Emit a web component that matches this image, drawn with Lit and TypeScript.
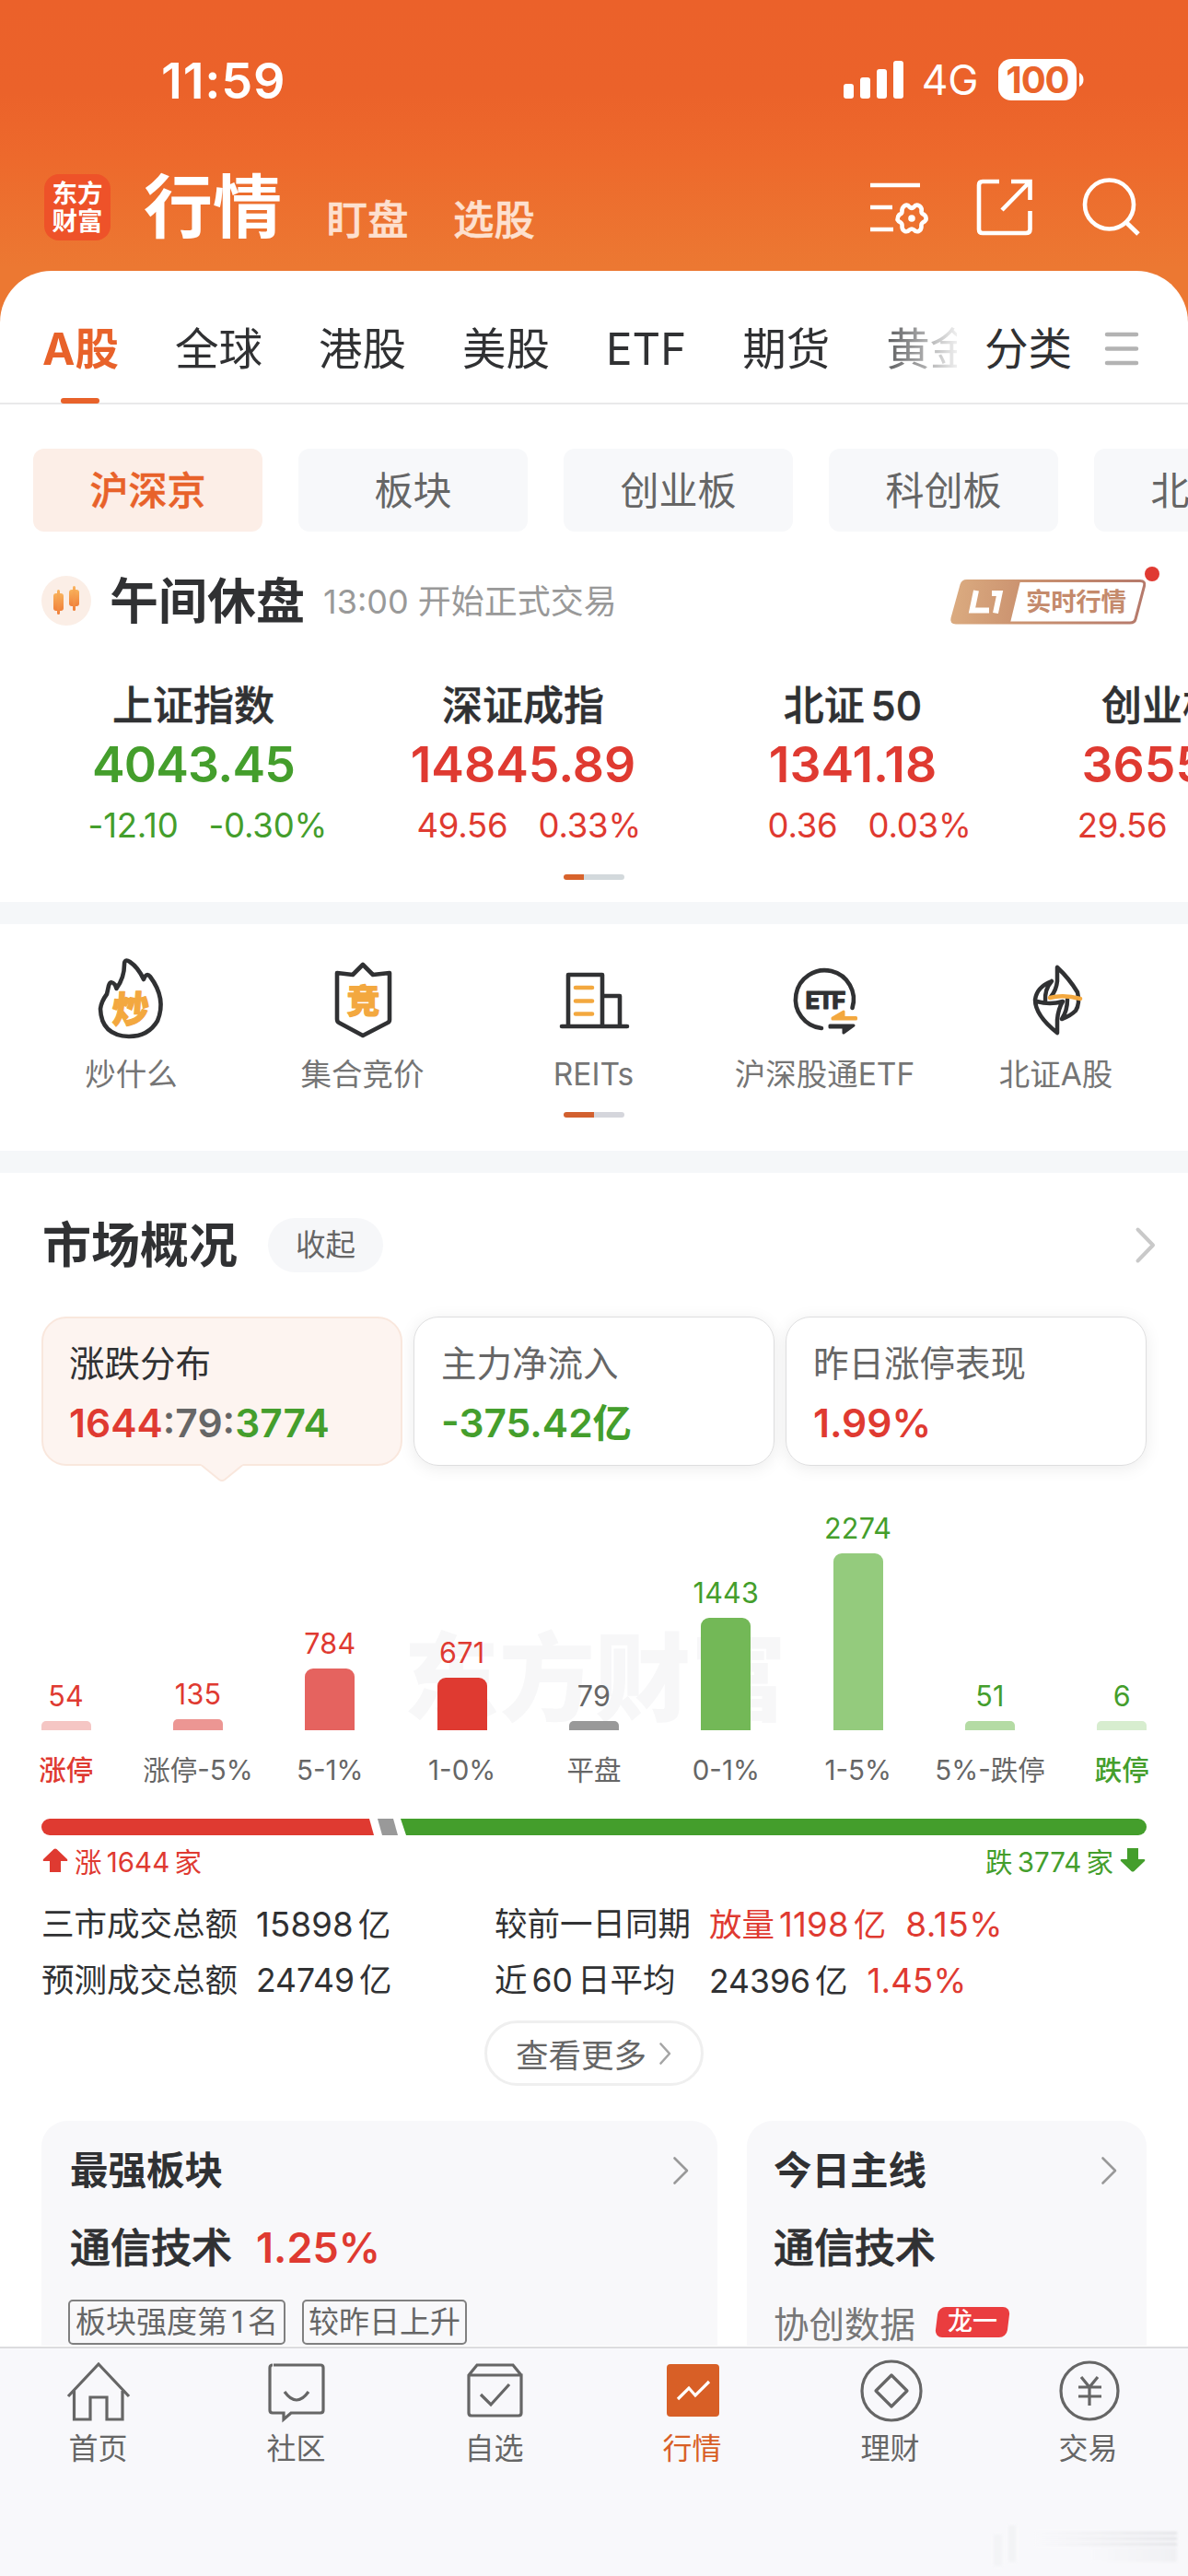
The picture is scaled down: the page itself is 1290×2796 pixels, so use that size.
import { LitElement, html, css, svg } from "lit";
import { customElement, property } from "lit/decorators.js";
import { classMap } from "lit/directives/class-map.js";

const TABS = ["A股", "全球", "港股", "美股", "ETF", "期货", "黄金"];
const CHIPS = ["沪深京", "板块", "创业板", "科创板", "北交所"];
const INDICES = [
  { name: "上证指数", value: "4043.45", diff: "-12.10", pct: "-0.30%", tone: "down" },
  { name: "深证成指", value: "14845.89", diff: "49.56", pct: "0.33%", tone: "up" },
  { name: "北证 50", value: "1341.18", diff: "0.36", pct: "0.03%", tone: "up" },
  { name: "创业板指", value: "3655.29", diff: "29.56", pct: "0.82%", tone: "up" },
];
const BARS = [
  { n: 54, label: "涨停", h: 10, c: "#f5c6c4", tone: "up", strong: true },
  { n: 135, label: "涨停-5%", h: 12, c: "#ec9693", tone: "up" },
  { n: 784, label: "5-1%", h: 67, c: "#e5635f", tone: "up" },
  { n: 671, label: "1-0%", h: 57, c: "#df3a31", tone: "up" },
  { n: 79, label: "平盘", h: 10, c: "#999999", tone: "flat" },
  { n: 1443, label: "0-1%", h: 122, c: "#73b857", tone: "down" },
  { n: 2274, label: "1-5%", h: 192, c: "#94cb7d", tone: "down" },
  { n: 51, label: "5%-跌停", h: 10, c: "#b4dba4", tone: "down" },
  { n: 6, label: "跌停", h: 10, c: "#d7edcf", tone: "down", strong: true },
];

const tones = css`
  .up { color: #df3a31; }
  .down { color: #449e2c; }
  .flat { color: #666; }
  svg { display: block; flex: none; overflow: visible; }
  :host, * { box-sizing: border-box; }
`;

const chevron = (w: number, h: number, color: string, sw: number) => html`<svg width=${w} height=${h} viewBox="0 0 ${w} ${h}" fill="none" stroke=${color} stroke-width=${sw}>
  <path d="M1.5 1.5 L${w - 2} ${h / 2} L1.5 ${h - 1.5}" stroke-linecap="round" stroke-linejoin="round"></path></svg>`;

@customElement("top-header")
class TopHeader extends LitElement {
  static styles = [tones, css`
    :host { display: block; height: 350px; padding-top: 63px; color: #fff;
      background: linear-gradient(#eb612a 0, #eb622a 100px, #ed692c 170px, #ec7832 290px); }
    .status { display: flex; align-items: center; height: 47px; padding: 0 113px 0 175px; }
    .time { font-size: 54px; font-weight: 600; letter-spacing: 0.8px; line-height: 47px; flex: 1; padding-top: 2px; }
    .net { font-size: 44.500px; line-height: 47px; margin: 2px 22px 0 19px; letter-spacing: -0.4px; }
    .battery { width: 85px; height: 45px; border-radius: 14px; background: #fff; color: #ea642b;
      font-size: 40px; font-weight: 700; line-height: 45px; text-align: center; letter-spacing: -1px; }
    .tip { margin-left: 3px; }
    .nav { display: flex; height: 72px; margin-top: 79px; padding-left: 48px; padding-right: 51px; align-items: flex-end; }
    .logo { width: 72px; height: 72px; border-radius: 16px; background: #ee5229; font-size: 27.500px; font-weight: 700;
      line-height: 30px; text-align: center; padding-top: 6px; }
    .title { font-size: 75px; font-weight: 700; line-height: 72px; margin-left: 36px; }
    .sub { font-size: 44.5px; font-weight: 500; line-height: 44px; color: #fde0cf; margin-left: 48.500px; -webkit-text-stroke: .5px currentColor; }
    .icons { margin-left: auto; }
  `];
  render() {
    return html`
      <div class="status">
        <span class="time">11:59</span>
        <svg width="66" height="41" viewBox="0 0 66 41" fill="#fff">
          <rect x="0" y="25" width="11" height="16" rx="3"></rect><rect x="18" y="18" width="11" height="23" rx="3"></rect>
          <rect x="36" y="9" width="11" height="32" rx="3"></rect><rect x="54" y="0" width="11" height="41" rx="3"></rect>
        </svg>
        <span class="net">4G</span>
        <span class="battery">100</span>
        <svg class="tip" width="5" height="15" viewBox="0 0 5 15" fill="#fff"><path d="M0 0C6 2 6 13 0 15Z"></path></svg>
      </div>
      <div class="nav">
        <div class="logo">东方<br>财富</div>
        <span class="title">行情</span><span class="sub">盯盘</span><span class="sub">选股</span>
        <svg class="icons" width="294" height="72" viewBox="945 189 294 72" fill="none" stroke="#fff" stroke-width="4.6">
          <path d="M945 201H999M945 225H969M945 249H970"></path>
          <path stroke-linejoin="round" d="M982 223.500Q985.500 221.500 987.500 224.500Q990 227 992.500 224.500Q994.500 221.500 998.500 223.500Q1001.500 226 1000.500 229.500Q1000.500 232 1003.500 233Q1006 235 1005.500 238.500Q1004.500 240.500 1002 241.500Q1000 243 1000.500 246Q1000.500 249.500 997.500 251Q994.500 252 992.500 249.500Q990 247.500 987.500 249.500Q985.500 252 982.500 251Q979.500 249.500 979.500 246Q980 243 978 241.500Q975.500 240.500 974.500 238.500Q974.500 235 976.500 233Q979.500 232 979.500 229.500Q979 226 982 223.500Z"></path>
          <circle cx="990" cy="237" r="3.800" fill="#fff" stroke="none"></circle>
          <path d="M1085 197H1067Q1063 197 1063 201V249Q1063 253 1067 253H1114Q1118.500 253 1118.500 249V229M1098 197H1118.500V217M1117.500 198L1088 228"></path>
          <circle cx="1204.500" cy="222" r="26.500"></circle><path d="M1223 241.500L1236 254" stroke-width="5"></path>
        </svg>
      </div>`;
  }
}

@customElement("market-tabs")
class MarketTabs extends LitElement {
  static styles = [tones, css`
    :host { display: block; }
    .tabs { display: flex; height: 145px; padding: 60px 54px 0 46px; border-bottom: 2px solid #e9e9ea; font-size: 47.500px; line-height: 50px; color: #303133; }
    .scroll { display: flex; gap: 61px; width: 993px; overflow: hidden; flex: none; height: 84px; white-space: nowrap;
      -webkit-mask-image: linear-gradient(90deg, #000 90%, rgba(0,0,0,.08) 100%); }
    .on { color: #e8622a; font-weight: 700; font-size: 47.500px; display: flex; flex-direction: column; align-items: center; justify-content: space-between; }
    .on i { width: 42px; height: 6px; border-radius: 3px; background: #e8622a; }
    .cat { margin-left: 30px; }
    .menu { margin: 7px 0 0 auto; }
    .chips { display: flex; gap: 39px; padding: 48px 0 0 36px; overflow: hidden; }
    .chip { flex: none; width: 249px; height: 90px; border-radius: 12px; background: #f7f8fa; color: #666; font-size: 42px; line-height: 92px; text-align: center; }
    .chip.sel { background: #fceee7; color: #e8622a; font-weight: 500; -webkit-text-stroke: .5px currentColor; }
  `];
  render() {
    return html`<div class="tabs">
        <div class="scroll">${TABS.map((t, i) => html`<span class=${classMap({ on: i === 0 })}>${t}${i === 0 ? html`<i></i>` : ""}</span>`)}</div>
        <span class="cat">分类</span>
        <svg class="menu" width="36" height="37" viewBox="0 0 36 37" stroke="#b3b3b3" stroke-width="4.5" stroke-linecap="round"><path d="M2 2H34M2 17.500H34M2 33H34"></path></svg>
      </div>
      <div class="chips">${CHIPS.map((c, i) => html`<span class=${classMap({ chip: true, sel: i === 0 })}>${c}</span>`)}</div>`;
  }
}

@customElement("index-panel")
class IndexPanel extends LitElement {
  static styles = [tones, css`
    :host { display: block; height: 402px; padding-top: 45px; }
    .head { display: flex; align-items: center; height: 60px; padding: 0 32px 0 45px; }
    .title { font-size: 53px; font-weight: 600; color: #303133; margin-left: 20px; line-height: 60px; padding-top: 1px; }
    .sub { font-size: 36px; color: #999; margin-left: 20px; line-height: 60px; flex: 1; white-space: pre; padding-top: 2px; }
    .lv { font-size: 27.500px; font-weight: 700; margin-top: -13px; }
    .cols { display: flex; padding-left: 31px; overflow: hidden; margin-top: 56px; }
    .col { flex: none; width: 358px; text-align: center; }
    .name { font-size: 44px; font-weight: 500; color: #303133; line-height: 56px; word-spacing: -5px; -webkit-text-stroke: .5px currentColor; }
    .val { font-size: 53.500px; font-weight: 600; line-height: 60px; height: 68px; padding-top: 6px; }
    .val.down { letter-spacing: -.8px; }
    .chg { display: grid; grid-template-columns: 1fr 1fr; column-gap: 33px; font-size: 36.500px; line-height: 48px; margin-top: 10px; letter-spacing: -.2px; }
    .chg :first-child { text-align: right; } .chg :last-child { text-align: left; }
    .pager { display: block; margin: 29px auto 0; width: 66px; height: 6px; border-radius: 3px; background: linear-gradient(90deg, #d8632c 22px, #d3d9dc 22px); }
  `];
  render() {
    return html`<div class="head">
        <svg width="54" height="54" viewBox="0 0 54 54"><defs><linearGradient id="c" x2="0" y2="1"><stop stop-color="#f9b25c"></stop><stop offset="1" stop-color="#f0803a"></stop></linearGradient></defs>
          <circle cx="27" cy="27" r="27" fill="#fbeee6"></circle>
          <g fill="url(#c)"><rect x="13" y="19" width="11" height="19" rx="3"></rect><rect x="17" y="15" width="3" height="27" rx="1.500"></rect>
          <rect x="30" y="15" width="11" height="18" rx="3"></rect><rect x="34" y="11" width="3" height="27" rx="1.500"></rect></g></svg>
        <span class="title">午间休盘</span><span class="sub">13:00 开始正式交易</span>
        <svg class="lv" width="226" height="64" viewBox="1032 613 226 64">
          <defs><linearGradient id="g" gradientUnits="userSpaceOnUse" x1="1035" y1="640" x2="1243" y2="665"><stop stop-color="#dbab80"></stop><stop offset=".35" stop-color="#cb9370"></stop><stop offset="1" stop-color="#b5796b"></stop></linearGradient></defs>
          <path d="M1050 629.500H1238Q1244 629.500 1242.500 635L1233 671Q1232 675 1227 675H1038Q1032.500 675 1034 670L1044 634Q1045 629.500 1050 629.500Z" fill="#fff" stroke="url(#g)" stroke-width="3"></path>
          <path d="M1050 629.500H1108L1097 675H1038Q1032.500 675 1034 670L1044 634Q1045 629.500 1050 629.500Z" fill="url(#g)"></path>
          <path d="M1060 640L1055.500 661.500H1074M1077 643H1085.500L1081 664.500" fill="none" stroke="#fff" stroke-width="6"></path>
          <text x="1114" y="662" fill="#c48a6c" textLength="109">实时行情</text>
          <circle cx="1251" cy="622" r="8" fill="#e03a32"></circle>
        </svg>
      </div>
      <div class="cols">${INDICES.map((x) => html`<div class="col">
        <div class="name">${x.name}</div><div class="val ${x.tone}">${x.value}</div>
        <div class="chg ${x.tone}"><span>${x.diff}</span><span>${x.pct}</span></div></div>`)}</div>
      <i class="pager"></i>`;
  }
}

@customElement("shortcut-grid")
class ShortcutGrid extends LitElement {
  static styles = [tones, css`
    :host { display: block; height: 294px; border: solid #f5f7f9; border-width: 24px 0; padding-top: 32px; }
    .grid { display: grid; grid-template-columns: repeat(5, 251px); padding-left: 17px; }
    .item { display: flex; flex-direction: column; align-items: center; font-size: 33.500px; line-height: 40px; color: #757575; gap: 15px; white-space: nowrap; }
    .glyph { font-weight: 900; fill: #f3a83f; stroke: #f3a83f; stroke-width: 1.2px; }
    .pager { display: block; margin: 21px auto 0; width: 66px; height: 6px; border-radius: 3px; background: linear-gradient(90deg, #d2602f 33px, #d5d6dc 33px); }
  `];
  icons = [
    svg`<path d="M34 12Q34 5 40 9Q49 15 55 28Q58 20 62 25Q80 49 70 73Q60 90 39 90Q9 89 8 60Q9 52 15 44L17 35Q19 28 24 34L25.500 38Q34 26 34 12Z"></path>
      <text class="glyph" x="21" y="75" font-size="40" transform="skewX(-4) translate(4 0)">炒</text>`,
    svg`<path d="M14 21L31 23L42 12L53 23L71 21V72Q71 74 69 75L42 89L16 75Q14 74 14 71Z"></path>
      <text class="glyph" x="24.500" y="65" font-size="36">竞</text>`,
    svg`<path d="M7 79H78M14 79V23H51V79M51 46H70V79"></path><path stroke="#f3a83f" d="M22 37H40M22 51.500H40M22 65.500H40"></path>`,
    svg`<path d="M38 81A31.500 31.500 0 1 1 71.500 59"></path>
      <text x="20.500" y="60" font-size="26" font-weight="800" fill="#303133" stroke="#303133" stroke-width="0.8" textLength="44">ETF</text>
      <path stroke="#f3a83f" stroke-width="3" fill="#f3a83f" d="M50 70L62 63V69.500H75.500V71H50Z"></path><path stroke-width="3" fill="#303133" d="M47 78H73L62 86V80H47Z"></path>`,
    svg`<path d="M43 15V30Q42 40 36 47M43 15Q56 27 65 42Q68 54 63 62Q57 68 48 71Q54 62 54 50M37 30Q21 36 19 50Q19 67 43 86V72Q44 60 49 52Q35 56 21 52M37 30Q29 39 30 52" stroke-width="4.500"></path><path stroke="#f3a83f" d="M35 48Q50 44 68 49"></path>`,
  ];
  labels = ["炒什么", "集合竞价", "REITs", "沪深股通ETF", "北证A股"];
  render() {
    return html`<div class="grid">${this.labels.map((l, i) => html`<div class="item">
      <svg width="84" height="96" viewBox="0 0 84 96" fill="none" stroke="#303133" stroke-width="4.6" stroke-linecap="round" stroke-linejoin="round">${this.icons[i]}</svg>
      <span>${l}</span></div>`)}</div><i class="pager"></i>`;
  }
}

@customElement("market-overview")
class MarketOverview extends LitElement {
  static styles = [tones, css`
    :host { display: block; padding-top: 48px; color: #303133; }
    .head { display: flex; align-items: center; height: 60px; padding: 0 36px 0 46px; }
    h2 { margin: 0; font-size: 53px; font-weight: 600; line-height: 60px; padding-top: 1px; }
    .pill { margin: 0 auto 0 33px; width: 125px; height: 59px; border-radius: 30px; background: #f6f7f9; color: #666; font-size: 32.500px; line-height: 59px; text-align: center; }
    .cards { display: flex; gap: 12px; padding: 48px 45px 0; }
    .card { flex: 1; height: 162px; border-radius: 27px; padding: 29px 29px 0; border: 1px solid #dededf; box-shadow: 0 3px 18px rgba(0,0,0,.08); font-size: 38.500px; line-height: 42px; color: #666; white-space: nowrap; }
    .card b { display: block; font-size: 42.500px; font-weight: 600; line-height: 48px; margin-top: 20px; }
    .card.sel { background: #fdf4f0; border: 2px solid #f9e7dd; box-shadow: none; color: #303133; position: relative; padding: 28px 28px 0; }
    .card .ptr { position: absolute; left: 171px; top: 158px; }
    .chart { display: grid; grid-template-columns: repeat(9, 1fr); height: 351px; position: relative; }
    .mark { position: absolute; left: 438px; top: 171px; font-size: 104px; line-height: 120px; font-weight: 900; color: #f7f7f8; white-space: nowrap; }
    .col { position: relative; display: flex; flex-direction: column; align-items: center; justify-content: flex-end; font-size: 29.500px; white-space: nowrap; }
    .num { line-height: 30px; margin-bottom: 12px; font-size: 30.500px; letter-spacing: .2px; }
    .bar { width: 54px; border-radius: 9px 9px 0 0; }
    .bar.short { border-radius: 5px 5px 0 0; }
    .lab { line-height: 36px; height: 64px; padding-top: 25px; color: #666; }
    .lab.strong { font-weight: 500; } .lab.upc { color: #df3a31; } .lab.downc { color: #449e2c; }
    .ratio { margin: 32px 45px 0; }
    .sum { display: flex; justify-content: space-between; padding: 0 46px; height: 54px; align-items: center; font-size: 29.500px; word-spacing: -3px; }
    .sum span { display: flex; align-items: center; gap: 7px; }
    .stats { display: grid; grid-template-columns: 233px 259px 233px 1fr; padding: 13px 0 0 45px; font-size: 35.500px; line-height: 60px; white-space: pre; }
    .stats span { word-spacing: -5px; }
    .stats .lg { font-size: 36.500px; letter-spacing: .2px; }
    .stats em { font-style: normal; margin-left: 21px; font-size: 36.500px; letter-spacing: .2px; }
    .stats em.lg { font-size: 37px; letter-spacing: .5px; }
    .stats b { font-weight: 400; }
    .more { display: flex; align-items: center; gap: 14px; width: 238px; height: 71px; margin: 12px auto 0; border: 3px solid #efefef; border-radius: 36px; padding-left: 31px; font-size: 35.500px; color: #666; }
  `];
  render() {
    return html`<div class="head"><h2>市场概况</h2><span class="pill">收起</span>${chevron(20, 37, "#c9c9c9", 4)}</div>
      <div class="cards">
        <div class="card sel">涨跌分布<b><span class="up">1644</span><span class="flat">:79:</span><span class="down">3774</span></b>
          <svg class="ptr" width="46" height="20" viewBox="0 0 46 20"><path d="M0 0L20 17Q23 19 26 17L46 0Z" fill="#fdf4f0"></path><path d="M1 1.500L20 17Q23 19 26 17L45 1.500" fill="none" stroke="#f9e7dd" stroke-width="2"></path></svg></div>
        <div class="card">主力净流入<b class="down">-375.42亿</b></div>
        <div class="card">昨日涨停表现<b class="up">1.99%</b></div>
      </div>
      <div class="chart"><span class="mark">东方财富</span>
        ${BARS.map((b) => html`<div class="col"><span class="num ${b.tone}">${b.n}</span>
          <i class="bar ${b.h < 20 ? "short" : ""}" style="height:${b.h}px;background:${b.c}"></i>
          <span class="lab ${b.strong ? "strong " + b.tone + "c" : ""}">${b.label}</span></div>`)}
      </div>
      <svg class="ratio" width="1200" height="18" viewBox="0 0 1200 18"><path d="M9 0H356L361 18H9A9 9 0 0 1 9 0Z" fill="#df3a31"></path><path d="M365 0H382L387 18H370Z" fill="#999"></path><path d="M390 0H1191A9 9 0 0 1 1191 18H396Z" fill="#449e2c"></path></svg>
      <div class="sum">
        <span class="up"><svg width="28" height="26" viewBox="0 0 28 26" fill="#df3a31"><path d="M12.500 1Q14 0 15.500 1L27 12Q28 14 26 14H20V26H8V14H2Q0 14 1 12Z"></path></svg>涨 1644 家</span>
        <span class="down">跌 3774 家<svg width="28" height="26" viewBox="0 0 28 26" fill="#449e2c"><path d="M12.500 25Q14 26 15.500 25L27 14Q28 12 26 12H20V0H8V12H2Q0 12 1 14Z"></path></svg></span>
      </div>
      <div class="stats">
        <span>三市成交总额</span><span><b class="lg">15898</b> 亿</span><span>较前一日同期</span><span class="up">放量 <b class="lg">1198</b> 亿<em class="lg">8.15%</em></span>
        <span>预测成交总额</span><span><b>24749</b> 亿</span><span>近 60 日平均</span><span><b>24396</b> 亿<em class="up">1.45%</em></span>
      </div>
      <div class="more">查看更多${chevron(13, 24, "#a5a5a5", 2.6)}</div>`;
  }
}

@customElement("sector-cards")
class SectorCards extends LitElement {
  static styles = [tones, css`
    :host { display: flex; gap: 32px; padding: 38px 45px 0; height: 282px; overflow: hidden; color: #303133; white-space: nowrap; }
    .card { width: 734px; height: 300px; border-radius: 28px 28px 0 0; background: #f8f8fa; padding: 29px 31px 0; flex: none; }
    .card.b { width: 434px; padding-left: 29px; padding-right: 32px; }
    .t { display: flex; justify-content: space-between; align-items: center; font-size: 41.500px; font-weight: 600; line-height: 50px; height: 50px; }
    .n { display: flex; align-items: center; gap: 26px; font-size: 44px; font-weight: 500; line-height: 60px; margin-top: 29px; -webkit-text-stroke: .7px currentColor; }
    .n b { font-size: 45px; font-weight: 600; -webkit-text-stroke: 0; }
    .tags { display: flex; gap: 18px; margin: 26px 0 0 -2px; }
    .tags span { border: 2px solid #808080; border-radius: 5px; height: 49px; padding: 0 6px; font-size: 33px; line-height: 45px; color: #666; word-spacing: -5px; }
    .tags span + span { padding: 0 5px; }
    .lead { display: flex; align-items: center; gap: 23px; height: 50px; margin-top: 25px; font-size: 38.500px; color: #777; }
    .dragon { position: relative; width: 78px; height: 33px; border-radius: 8px; background: #ea3d3f; color: #fff; font-size: 27px; font-weight: 500; line-height: 32px; text-align: center; transform: skewX(-7deg); }
    .dragon u { display: block; text-decoration: none; transform: skewX(7deg); }
  `];
  render() {
    const c = chevron(17, 30, "#999", 2.6);
    return html`<div class="card"><div class="t">最强板块${c}</div><div class="n">通信技术<b class="up">1.25%</b></div>
        <div class="tags"><span>板块强度第 1 名</span><span>较昨日上升</span></div></div>
      <div class="card b"><div class="t">今日主线${c}</div><div class="n">通信技术</div>
        <div class="lead">协创数据<span class="dragon"><u>龙一</u></span></div></div>`;
  }
}

@customElement("bottom-nav")
class BottomNav extends LitElement {
  @property({ type: Number }) active = 3;
  static styles = [tones, css`
    :host { display: flex; height: 250px; background: #f8f8fb; border-top: 2px solid #dcdcde; position: relative; }
    .item { flex: 1; display: flex; flex-direction: column; align-items: center; padding-top: 12px; gap: 7px; font-size: 32px; line-height: 44px; color: #666; }
    .item svg { margin-right: 2px; }
    .item span { margin-right: 2px; }
    .item.on { color: #d85f26; }
    .smudge { position: absolute; right: 10px; bottom: 12px; width: 215px; height: 44px; opacity: .65; filter: blur(1.5px); }
  `];
  items = [
    { l: "首页", i: svg`<path d="M7 40L40 5L73 40M13.500 34V65H31V41H49V65H66V34"></path>` },
    { l: "社区", i: svg`<path d="M15 6H66Q69 6 69 9V55Q69 58 66 58H34L26 65V58H14Q11 58 11 55V9Q11 6 14 6M27 35Q40 53 53 35"></path>` },
    { l: "自选", i: svg`<path d="M12 17H69V58Q69 61 66 61H15Q12 61 12 58V17L21 6H60L69 17M25 38L36 49L56 27"></path>` },
    { l: "行情", i: svg`<rect x="12" y="5" width="57" height="57" rx="4" fill="#d85f26" stroke="none"></rect><path stroke="#fff" d="M24 43L36 31L43 39L58 24"></path>` },
    { l: "理财", i: svg`<circle cx="41" cy="34" r="32"></circle><path d="M41 17L58 34L41 51L24 34Z" stroke-linejoin="round"></path>` },
    { l: "交易", i: svg`<circle cx="41" cy="34" r="31"></circle><path d="M32 19L41 30L50 19M41 30V50M29 30H54M29 40H54"></path>` },
  ];
  render() {
    return html`${this.items.map((x, i) => html`<div class=${classMap({ item: true, on: i === this.active })}>
        <svg width="80" height="68" viewBox="0 0 80 68" fill="none" stroke="#666" stroke-width="3.2">${x.i}</svg><span>${x.l}</span></div>`)}
      <svg class="smudge" viewBox="0 0 215 44"><defs><linearGradient id="s"><stop stop-color="#f8f8fb"></stop><stop offset="1" stop-color="#d4d5d8"></stop></linearGradient></defs>
        <rect x="14" y="10" width="9" height="34" fill="#f1f2f4"></rect><rect x="30" y="0" width="8" height="40" fill="#f0f1f3"></rect>
        <rect x="60" y="7" width="153" height="3" fill="url(#s)"></rect><rect x="60" y="13" width="153" height="3" fill="url(#s)"></rect><rect x="60" y="19" width="153" height="3" fill="url(#s)"></rect><rect x="120" y="24" width="93" height="16" fill="url(#s)" opacity=".35"></rect></svg>`;
  }
}

@customElement("app-root")
class AppRoot extends LitElement {
  static styles = css`
    :host { display: block; width: 1290px; height: 2796px; overflow: hidden; background: #fff;
      font-family: Inter, "Noto Sans CJK SC", "Liberation Sans", sans-serif; }
    .sheet { margin-top: -56px; background: #fff; border-radius: 56px 56px 0 0; overflow: hidden; position: relative; height: 2253px; }
  `;
  render() {
    return html`<top-header></top-header>
      <div class="sheet"><market-tabs></market-tabs><index-panel></index-panel><shortcut-grid></shortcut-grid>
        <market-overview></market-overview><sector-cards></sector-cards></div>
      <bottom-nav></bottom-nav>`;
  }
}
